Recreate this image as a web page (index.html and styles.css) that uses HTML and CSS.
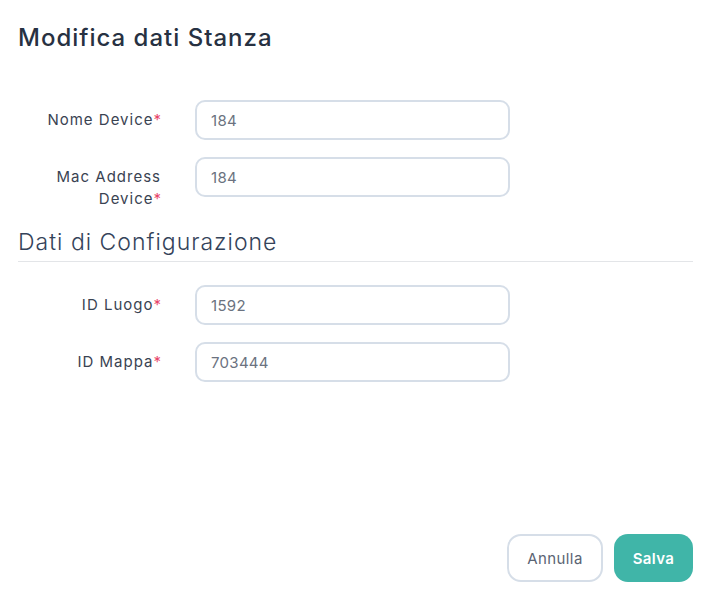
FILE: index.html
```html
<!DOCTYPE html>
<html lang="it">
<head>
<meta charset="utf-8">
<title>Modifica dati Stanza</title>
<link rel="stylesheet" href="styles.css">
</head>
<body>
<div class="modal">
  <h1 class="title">Modifica dati Stanza</h1>
  <form class="form">
    <div class="group first">
      <div class="row">
        <label class="label required">Nome Device</label>
        <input class="input" type="text" value="184">
      </div>
      <div class="row">
        <label class="label required">Mac Address Device</label>
        <input class="input" type="text" value="184">
      </div>
    </div>
    <h2 class="section">Dati di Configurazione</h2>
    <div class="group">
      <div class="row">
        <label class="label required">ID Luogo</label>
        <input class="input" type="text" value="1592">
      </div>
      <div class="row">
        <label class="label required">ID Mappa</label>
        <input class="input" type="text" value="703444">
      </div>
    </div>
  </form>
  <div class="actions">
    <button class="btn btn-cancel" type="button">Annulla</button>
    <button class="btn btn-save" type="button">Salva</button>
  </div>
</div>
</body>
</html>
```
FILE: styles.css
```css
* { box-sizing: border-box; }
html, body { margin: 0; padding: 0; background: #ffffff; }
body {
  font-family: Inter, "Open Sans", "Liberation Sans", sans-serif;
  color: #2d3748;
}
.modal {
  width: 727px;
  height: 599px;
  padding: 22px 34px 17px 18px;
  display: flex;
  flex-direction: column;
}
.title {
  margin: 0;
  font-size: 24px;
  font-weight: 500;
  line-height: 32px;
  color: #273142;
  letter-spacing: 1px;
}
.form { display: flex; flex-direction: column; }
.group { display: flex; flex-direction: column; gap: 17px; }
.group.first { margin-top: 46px; }
.row { display: flex; align-items: flex-start; }
.label {
  width: 143px;
  padding-top: 9px;
  margin-right: 34px;
  text-align: right;
  font-size: 15px;
  line-height: 22px;
  letter-spacing: 1px;
  color: #3a4352;
}
.label.required::after { content: "*"; color: #e8456b; letter-spacing: 0; }
.input {
  width: 315px;
  height: 40px;
  border: 2px solid #d6dee8;
  border-radius: 10px;
  padding: 0 14px;
  font-family: inherit;
  font-size: 15px;
  letter-spacing: 0.3px;
  color: #6b7280;
  background: #fff;
  outline: none;
}
.section {
  margin: 16px 0 23px 0;
  padding-bottom: 3px;
  border-bottom: 1px solid #e3e5e8;
  font-size: 23px;
  font-weight: 300;
  line-height: 32px;
  letter-spacing: 1px;
  color: #34435a;
}
.actions {
  margin-top: auto;
  display: flex;
  justify-content: flex-end;
  gap: 11px;
}
.btn {
  height: 48px;
  border-radius: 14px;
  font-family: inherit;
  font-size: 15px;
  letter-spacing: 0.4px;
  padding: 0;
  cursor: pointer;
}
.btn-cancel {
  width: 96px;
  background: #fff;
  border: 2px solid #d6dee8;
  color: #5b6473;
}
.btn-save {
  width: 79px;
  background: #40b5a8;
  border: 0;
  color: #fff;
  font-weight: 600;
}
```
